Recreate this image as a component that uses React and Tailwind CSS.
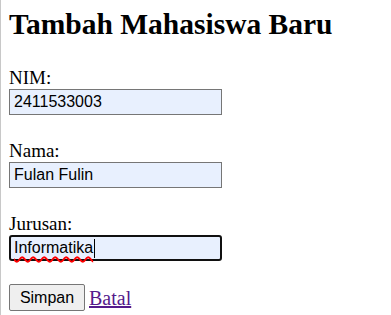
export default function App() {
  return (
    <div className="min-h-screen border-l border-[#c8c8c8] bg-white pl-[8px] pt-[8px] text-black">
      <h1 className="font-['Liberation_Serif',serif] text-[29.5px] font-bold leading-[32px]">
        Tambah Mahasiswa Baru
      </h1>

      <form className="flex flex-col items-start font-['Liberation_Serif',serif]">
        <label className="mt-[28px] text-[19px] leading-[20px]">NIM:</label>
        <input
          type="text"
          defaultValue="2411533003"
          readOnly
          className="mt-[1px] box-border h-[26px] w-[213px] border border-[#767676] bg-[#e8f0fe] px-[4px] font-['Liberation_Sans',sans-serif] text-[16px] text-black outline-none"
        />

        <label className="mt-[26px] text-[19px] leading-[20px]">Nama:</label>
        <input
          type="text"
          defaultValue="Fulan Fulin"
          readOnly
          className="mt-[1px] box-border h-[26px] w-[213px] border border-[#767676] bg-[#e8f0fe] px-[4px] font-['Liberation_Sans',sans-serif] text-[16px] text-black outline-none"
        />

        <label className="mt-[26px] text-[19px] leading-[20px]">Jurusan:</label>
        <div className="mt-[1px] box-border flex h-[26px] w-[213px] items-center rounded-[3px] border-2 border-[#101010] bg-[#e8f0fe] px-[3px] font-['Liberation_Sans',sans-serif] text-[16px] leading-[18px]">
          <span className="underline decoration-[#ff0000] decoration-wavy decoration-[1.5px] underline-offset-[3px]">
            Informatika
          </span>
          <span className="ml-[1px] h-[19px] w-[1px] bg-black" />
        </div>

        <div className="mt-[23px] flex items-center gap-[4px]">
          <button
            type="button"
            className="box-border h-[27px] w-[76px] rounded-[2px] border border-[#767676] bg-[#efefef] font-['Liberation_Sans',sans-serif] text-[16px] text-black"
          >
            Simpan
          </button>
          <a href="#" className="text-[20px] leading-[20px] text-[#551a8b] underline">
            Batal
          </a>
        </div>
      </form>
    </div>
  )
}
